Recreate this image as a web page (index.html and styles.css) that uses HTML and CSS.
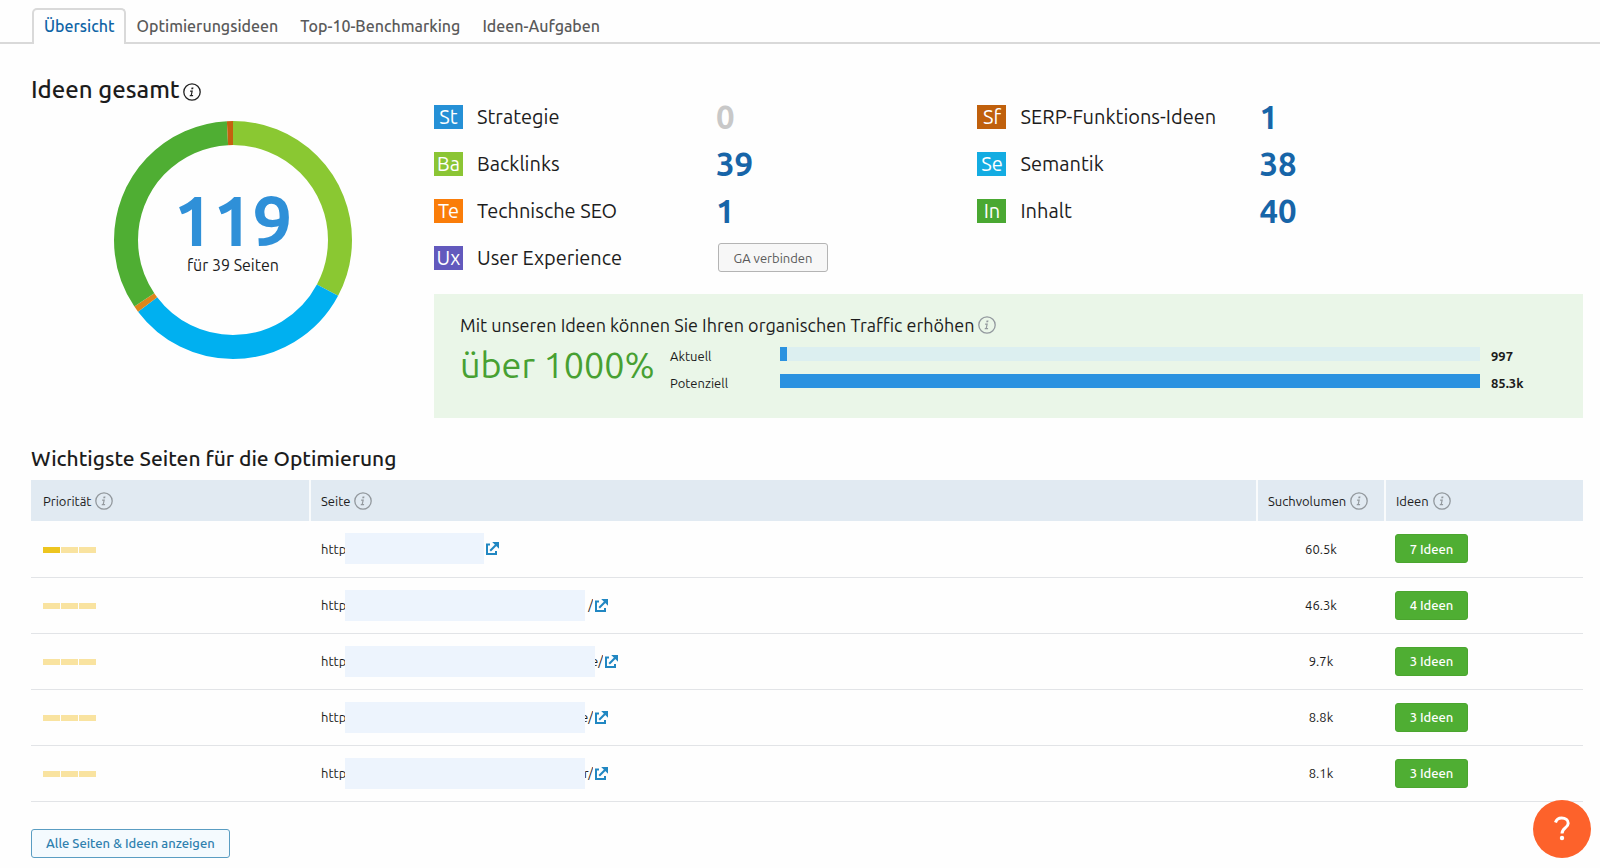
FILE: index.html
```html
<!DOCTYPE html>
<html lang="de">
<head>
<meta charset="utf-8">
<title>Ideen – Übersicht</title>
<link rel="stylesheet" href="styles.css">
</head>
<body>
<svg class="defs" aria-hidden="true">
  <symbol id="info" viewBox="0 0 18 18"><circle cx="9" cy="9" r="8.2" fill="none" stroke="currentColor" stroke-width="1.3"/><path d="M8.6 4.4h1.9l-.4 1.8H8.2zM7.2 7.5h2.7l-1 4.6h1.3l-.3 1.2H6.6l.3-1.2h.8l.7-3.4H7z" fill="currentColor"/></symbol>
  <symbol id="ext" viewBox="0 0 13 13"><path d="M4 2.6H1v9.4h9V9" fill="none" stroke="currentColor" stroke-width="2"/><path d="M4.2 8.8l6-6" fill="none" stroke="currentColor" stroke-width="2"/><path d="M6.2 0H13v6.8z" fill="currentColor"/></symbol>
</svg>

<nav class="tabs">
  <a class="tab tab-active" href="#uebersicht">Übersicht</a>
  <a class="tab" href="#ideen">Optimierungsideen</a>
  <a class="tab" href="#benchmarking">Top-10-Benchmarking</a>
  <a class="tab" href="#aufgaben">Ideen-Aufgaben</a>
</nav>

<main class="page">
  <section class="overview">
    <div class="total">
      <h1 class="title">Ideen gesamt <svg class="info info-dark"><use href="#info"/></svg></h1>
      <div class="donut">
        <svg class="ring" viewBox="0 0 238 238">
          <g fill="none" stroke-width="24" transform="rotate(-90 119 119)">
            <circle cx="119" cy="119" r="107" pathLength="119" stroke="#8ac832" stroke-dasharray="39 80"/>
            <circle cx="119" cy="119" r="107" pathLength="119" stroke="#00b0f0" stroke-dasharray="38 81" stroke-dashoffset="-39"/>
            <circle cx="119" cy="119" r="107" pathLength="119" stroke="#de861c" stroke-dasharray="1 118" stroke-dashoffset="-77"/>
            <circle cx="119" cy="119" r="107" pathLength="119" stroke="#4fae33" stroke-dasharray="40 79" stroke-dashoffset="-78"/>
            <circle cx="119" cy="119" r="107" pathLength="119" stroke="#c4610f" stroke-dasharray="1 118" stroke-dashoffset="-118"/>
          </g>
        </svg>
        <div class="donut-text">
          <strong class="donut-number">119</strong>
          <span class="donut-caption">für 39 Seiten</span>
        </div>
      </div>
    </div>

    <div class="details">
      <div class="stats">
        <ul class="stat-list">
          <li class="stat"><span class="badge st">St</span><span class="stat-name">Strategie</span><span class="count count-zero">0</span></li>
          <li class="stat"><span class="badge ba">Ba</span><span class="stat-name">Backlinks</span><a class="count" href="#backlinks">39</a></li>
          <li class="stat"><span class="badge te">Te</span><span class="stat-name">Technische SEO</span><a class="count" href="#technik">1</a></li>
          <li class="stat"><span class="badge ux">Ux</span><span class="stat-name">User Experience</span><button class="btn btn-ga" type="button">GA verbinden</button></li>
        </ul>
        <ul class="stat-list">
          <li class="stat"><span class="badge sf">Sf</span><span class="stat-name">SERP-Funktions-Ideen</span><a class="count" href="#serp">1</a></li>
          <li class="stat"><span class="badge se">Se</span><span class="stat-name">Semantik</span><a class="count" href="#semantik">38</a></li>
          <li class="stat"><span class="badge in">In</span><span class="stat-name">Inhalt</span><a class="count" href="#inhalt">40</a></li>
        </ul>
      </div>

      <div class="traffic">
        <p class="traffic-title">Mit unseren Ideen können Sie Ihren organischen Traffic erhöhen <svg class="info"><use href="#info"/></svg></p>
        <div class="traffic-body">
          <div class="uplift">über 1000%</div>
          <div class="bars">
            <span>Aktuell</span><div class="bar"><div class="fill" style="width:1%"></div></div><b>997</b>
            <span>Potenziell</span><div class="bar"><div class="fill" style="width:100%"></div></div><b>85.3k</b>
          </div>
        </div>
      </div>
    </div>
  </section>

  <section class="pages">
    <h2 class="subtitle">Wichtigste Seiten für die Optimierung</h2>
    <table class="table">
      <colgroup><col class="col-priority"><col><col class="col-volume"><col class="col-ideas"></colgroup>
      <thead>
        <tr>
          <th><span class="head">Priorität <svg class="info"><use href="#info"/></svg></span></th>
          <th><span class="head">Seite <svg class="info"><use href="#info"/></svg></span></th>
          <th><span class="head">Suchvolumen <svg class="info"><use href="#info"/></svg></span></th>
          <th><span class="head">Ideen <svg class="info"><use href="#info"/></svg></span></th>
        </tr>
      </thead>
      <tbody>
        <tr>
          <td><div class="priority"><i class="on"></i><i></i><i></i></div></td>
          <td><div class="url"><span class="url-start">http</span><span class="mask mask-s"></span><a href="#s1" aria-label="Seite öffnen"><svg class="ext"><use href="#ext"/></svg></a></div></td>
          <td class="volume">60.5k</td>
          <td><button class="btn btn-ideas" type="button">7 Ideen</button></td>
        </tr>
        <tr>
          <td><div class="priority"><i></i><i></i><i></i></div></td>
          <td><div class="url"><span class="url-start">http</span><span class="mask mask-l"></span><span class="url-end">/</span><a href="#s2" aria-label="Seite öffnen"><svg class="ext"><use href="#ext"/></svg></a></div></td>
          <td class="volume">46.3k</td>
          <td><button class="btn btn-ideas" type="button">4 Ideen</button></td>
        </tr>
        <tr>
          <td><div class="priority"><i></i><i></i><i></i></div></td>
          <td><div class="url"><span class="url-start">http</span><span class="mask mask-xl"></span><span class="url-end">e/</span><a href="#s3" aria-label="Seite öffnen"><svg class="ext"><use href="#ext"/></svg></a></div></td>
          <td class="volume">9.7k</td>
          <td><button class="btn btn-ideas" type="button">3 Ideen</button></td>
        </tr>
        <tr>
          <td><div class="priority"><i></i><i></i><i></i></div></td>
          <td><div class="url"><span class="url-start">http</span><span class="mask mask-m"></span><span class="url-end">e/</span><a href="#s4" aria-label="Seite öffnen"><svg class="ext"><use href="#ext"/></svg></a></div></td>
          <td class="volume">8.8k</td>
          <td><button class="btn btn-ideas" type="button">3 Ideen</button></td>
        </tr>
        <tr>
          <td><div class="priority"><i></i><i></i><i></i></div></td>
          <td><div class="url"><span class="url-start">http</span><span class="mask mask-m"></span><span class="url-end">r/</span><a href="#s5" aria-label="Seite öffnen"><svg class="ext"><use href="#ext"/></svg></a></div></td>
          <td class="volume">8.1k</td>
          <td><button class="btn btn-ideas" type="button">3 Ideen</button></td>
        </tr>
      </tbody>
    </table>
    <button class="btn btn-all" type="button">Alle Seiten &amp; Ideen anzeigen</button>
  </section>
</main>

<button class="help" type="button" aria-label="Hilfe">
  <svg viewBox="0 0 58 58"><path d="M22.500 22.500c.8-2.900 3.100-4.500 6.200-4.500 3.800 0 6.500 2.100 6.500 5.200 0 4.800-6.200 4.800-6.200 10.300" fill="none" stroke="#fff" stroke-width="3"/><circle cx="29" cy="38" r="2.200" fill="#fff"/></svg>
</button>
</body>
</html>
```
FILE: styles.css
```css
* { box-sizing: border-box; }

body {
  margin: 0;
  background: #fefefe;
  color: #1c1c1c;
  font-family: Ubuntu, "Noto Sans", sans-serif;
  font-size: 13px;
  line-height: 20px;
}

h1, h2, p, ul { margin: 0; padding: 0; }
ul { list-style: none; }
a { color: inherit; text-decoration: none; }
button { font: inherit; cursor: pointer; }

.defs { position: absolute; width: 0; height: 0; }

.tabs {
  display: flex;
  padding: 8px 32px 0;
  box-shadow: inset 0 -2px #d9d9d9;
}
.tab {
  padding: 9px 11px 8px;
  color: #5a5a5a;
  font-size: 16px;
  font-weight: 500;
  line-height: 19px;
}
.tab-active {
  border: 2px solid #d9d9d9;
  border-bottom: 0;
  border-radius: 5px 5px 0 0;
  padding: 7px 9px 8px 10px;
  background: #fefefe;
  color: #0f64a6;
}

.page { padding: 30px 17px 0 31px; }

.overview {
  display: grid;
  grid-template-columns: 403px 1fr;
}
.title {
  display: flex;
  align-items: center;
  gap: 3px;
  font-size: 24px;
  font-weight: 500;
  line-height: 32px;
}
.info {
  flex: none;
  width: 18px;
  height: 18px;
  color: #93999e;
}
.info-dark { color: #222; margin-top: 4px; }

.donut {
  display: grid;
  width: 238px;
  margin: 15px 0 0 83px;
}
.ring, .donut-text { grid-area: 1 / 1; }
.ring { width: 238px; height: 238px; }
.donut-text {
  display: flex;
  flex-direction: column;
  align-items: center;
  padding-top: 66px;
}
.donut-number {
  color: #2f90d8;
  font-size: 70px;
  font-weight: 600;
  line-height: 66px;
}
.donut-caption { font-size: 16px; line-height: 24px; }

.details { padding-top: 19px; }
.stats {
  display: grid;
  grid-template-columns: 543fr 605fr;
}
.stat {
  display: flex;
  align-items: center;
  height: 47px;
}
.badge {
  width: 29px;
  margin-right: 14px;
  color: #fff;
  font-size: 20px;
  line-height: 24px;
  text-align: center;
}
.st { background: #2590d6; }
.ba { background: #8bc534; }
.te { background: #fa7d09; }
.ux { background: #6259bd; }
.sf { background: #c0600c; }
.se { background: #13ace2; }
.in { background: #4aa832; }
.stat-name { width: 239px; font-size: 20px; line-height: 28px; }
.count {
  color: #1765a8;
  font-size: 33px;
  font-weight: 600;
  line-height: 40px;
}
.count-zero { color: #c8c8c8; }

.btn {
  height: 29px;
  padding: 0 14px;
  border: 1px solid;
  border-radius: 3px;
  font-size: 13px;
  line-height: 20px;
  white-space: nowrap;
}
.btn-ga {
  width: 110px;
  margin-left: 2px;
  padding: 0;
  border-color: #b4b4b4;
  background: #f7f7f7;
  color: #5a5a5a;
}

.traffic {
  margin-top: 13px;
  padding: 18px 26px 22px;
  background: #eaf6e8;
}
.traffic-title {
  display: flex;
  align-items: center;
  gap: 3px;
  font-size: 18px;
  line-height: 26px;
}
.traffic-body { display: flex; gap: 16px; }
.uplift {
  width: 194px;
  color: #47a032;
  font-size: 36px;
  line-height: 54px;
  white-space: nowrap;
}
.bars {
  display: grid;
  flex: 1;
  grid-template-columns: 110px 1fr 77px;
  grid-auto-rows: 27px;
  align-items: center;
  padding-top: 4px;
}
.bars b { padding-left: 11px; font-weight: 600; }
.bar { height: 14px; margin-bottom: 4px; background: #dceff0; }
.fill { height: 100%; background: #2b92e0; }

.subtitle {
  margin-top: 24px;
  font-size: 21px;
  font-weight: 500;
  line-height: 32px;
}
.table {
  width: 100%;
  margin-top: 6px;
  border-collapse: collapse;
  table-layout: fixed;
}
.col-priority { width: 279px; }
.col-volume { width: 128px; }
.col-ideas { width: 198px; }
.table th {
  height: 41px;
  padding: 0 0 0 12px;
  background: #e1eaf2;
  font-weight: 400;
  text-align: left;
}
.table th + th { padding-left: 10px; border-left: 2px solid #f9fbfc; }
.head { display: flex; align-items: center; gap: 4px; }
.table td {
  height: 56px;
  padding: 0 0 0 11px;
  border-bottom: 1px solid #e2e4e7;
}
.table td:first-child { padding-left: 12px; }
.table td:last-child { padding-left: 10px; }
.table .volume { padding: 0; text-align: center; }

.priority { display: flex; gap: 1px; padding-top: 2px; }
.priority i { width: 17px; height: 6px; background: #f9e3a0; }
.priority .on { background: #edc51f; }

.url { display: flex; align-items: center; }
.url a { margin-left: 2px; line-height: 0; }
.url-start { width: 24px; overflow: hidden; }
.url-end {
  display: flex;
  justify-content: flex-end;
  width: 8px;
  overflow: hidden;
}
.mask { height: 31px; background: #edf4fd; }
.mask-s { width: 139px; }
.mask-m { width: 240px; }
.mask-l { width: 240px; }
.mask-xl { width: 250px; }
.ext { width: 13px; height: 13px; color: #2187c2; }

.btn-ideas {
  width: 73px;
  padding: 0;
  border-color: #4ba52f;
  background: #4fae33;
  color: #fff;
  font-weight: 500;
}
.btn-all {
  margin-top: 27px;
  padding: 0 14px;
  border-color: #5a9dc2;
  background: #f4fafe;
  color: #2f80ae;
  font-weight: 500;
}

.help {
  position: fixed;
  right: 9px;
  bottom: 10px;
  width: 58px;
  height: 58px;
  padding: 0;
  border: 0;
  border-radius: 50%;
  background: #fd622b;
}
.help svg { display: block; width: 58px; height: 58px; }
```
